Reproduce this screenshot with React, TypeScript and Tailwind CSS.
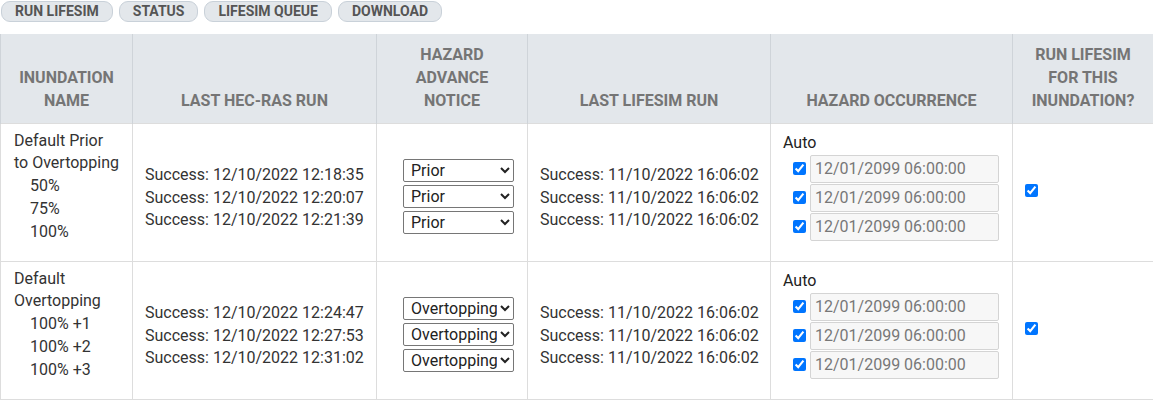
import React from "react";

const rows = [
  {
    name: ["Default Prior", "to Overtopping"],
    subs: ["50%", "75%", "100%"],
    hec: ["12/10/2022 12:18:35", "12/10/2022 12:20:07", "12/10/2022 12:21:39"],
    notice: "Prior",
  },
  {
    name: ["Default", "Overtopping"],
    subs: ["100% +1", "100% +2", "100% +3"],
    hec: ["12/10/2022 12:24:47", "12/10/2022 12:27:53", "12/10/2022 12:31:02"],
    notice: "Overtopping",
  },
];

function Check() {
  return (
    <input
      type="checkbox"
      defaultChecked
      className="w-[13px] h-[13px] m-0 accent-[#0075ff]"
    />
  );
}

export default function App() {
  return (
    <div className="w-[1153px] h-[400px] bg-white text-[#333] overflow-hidden font-['Roboto',sans-serif]">
      {/* Toolbar */}
      <div className="flex gap-[6px] pl-[1px] pt-[1px] h-[34px]">
        {["RUN LIFESIM", "STATUS", "LIFESIM QUEUE", "DOWNLOAD"].map((b) => (
          <button
            key={b}
            className="h-[21px] px-[13px] rounded-[9px] border border-[#c9d1d9] bg-[#e3e7eb] text-[14px] leading-[19px] font-bold text-[#555]"
          >
            {b}
          </button>
        ))}
      </div>

      <table className="border-collapse table-fixed w-[1153px] text-[16px]">
        <colgroup>
          <col className="w-[132px]" />
          <col className="w-[244px]" />
          <col className="w-[151px]" />
          <col className="w-[243px]" />
          <col className="w-[242px]" />
          <col className="w-[141px]" />
        </colgroup>
        <thead>
          <tr className="bg-[#e3e7eb] h-[89px]">
            {[
              "INUNDATION NAME",
              "LAST HEC-RAS RUN",
              "HAZARD ADVANCE NOTICE",
              "LAST LIFESIM RUN",
              "HAZARD OCCURRENCE",
              "RUN LIFESIM FOR THIS INUNDATION?",
            ].map((h, i) => (
              <th
                key={h}
                className={`border-x border-[#cfd4d9] align-bottom text-center text-[16px] leading-[23px] font-bold text-[#757575] pb-[11px] ${
                  i === 0 ? "px-[16px]" : i === 2 ? "px-[22px]" : i === 5 ? "px-[18px]" : "px-2"
                }`}
              >
                {h}
              </th>
            ))}
          </tr>
        </thead>
        <tbody>
          {rows.map((r) => (
            <tr key={r.name.join()} className="h-[138px]">
              <td className="border border-[#ddd] align-top pl-[13px] pr-1 pt-[6px] leading-[22.75px]">
                {r.name.map((n) => (
                  <div key={n}>{n}</div>
                ))}
                {r.subs.map((s) => (
                  <div key={s} className="pl-[16px]">
                    {s}
                  </div>
                ))}
              </td>
              <td className="border border-[#ddd] align-middle pl-[12px] leading-[22.5px] pt-[12px]">
                {r.hec.map((h) => (
                  <div key={h}>Success: {h}</div>
                ))}
              </td>
              <td className="border border-[#ddd] align-middle pl-[26px] pt-[8px]">
                <div className="flex flex-col gap-[3px]">
                  {[0, 1, 2].map((k) => (
                    <select
                      key={k}
                      defaultValue={r.notice}
                      className="w-[111px] h-[23px] border border-[#767676] rounded-[2px] bg-white text-[16px] text-[#222] pl-[3px] leading-[20px]"
                    >
                      <option>Prior</option>
                      <option>Overtopping</option>
                    </select>
                  ))}
                </div>
              </td>
              <td className="border border-[#ddd] align-middle pl-[12px] leading-[22.5px] pt-[12px]">
                {[0, 1, 2].map((k) => (
                  <div key={k}>Success: 11/10/2022 16:06:02</div>
                ))}
              </td>
              <td className="border border-[#ddd] align-top pl-[12px] pt-[7px]">
                <div className="leading-[23px] text-[#222]">Auto</div>
                <div className="flex flex-col gap-[1px] mt-[1px]">
                  {[0, 1, 2].map((k) => (
                    <div key={k} className="flex items-center gap-[4px] pl-[10px]">
                      <Check />
                      <input
                        disabled
                        value="12/01/2099 06:00:00"
                        readOnly
                        className="w-[189px] h-[28px] border border-[#d4d4d4] rounded-[2px] bg-[#f7f7f7] text-[16px] text-[#777] pl-[4px]"
                      />
                    </div>
                  ))}
                </div>
              </td>
              <td className="border border-[#ddd] align-middle pl-[12px] pt-0">
                <Check />
              </td>
            </tr>
          ))}
        </tbody>
      </table>
    </div>
  );
}
